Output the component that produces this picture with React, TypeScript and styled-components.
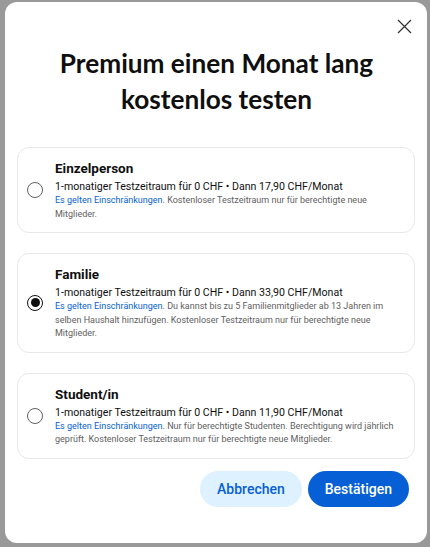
import styled, { createGlobalStyle } from "styled-components";

const GlobalStyle = createGlobalStyle`
    html, body {
        margin: 0;
        padding: 0;
        width: 430px;
        height: 547px;
        overflow: hidden;
        background: #999999;
    }
    * {
        box-sizing: border-box;
    }
`;

const Overlay = styled.div`
    width: 430px;
    height: 547px;
    padding: 2px 3px 4px 5px;
    background: #999999;
    font-family: Roboto, "Liberation Sans", Arial, sans-serif;
`;

const Dialog = styled.div`
    width: 422px;
    height: 541px;
    background: #ffffff;
    border-radius: 12px;
    padding: 12px 11px 0 12px;
    display: flex;
    flex-direction: column;
`;

const Header = styled.div`
    display: flex;
    justify-content: flex-end;
    height: 24px;
`;

const CloseButton = styled.button`
    width: 24px;
    height: 24px;
    padding: 0;
    border: none;
    background: none;
    display: flex;
    align-items: center;
    justify-content: center;
    cursor: pointer;
`;

const Title = styled.h1`
    margin: 7px 0 0;
    font-family: Lato, "Open Sans", sans-serif;
    font-weight: 700;
    font-size: 26.2px;
    line-height: 36px;
    color: #0f0f0f;
    text-align: center;
    padding: 0 24px;
`;

const PlanList = styled.div`
    margin-top: 30px;
    display: flex;
    flex-direction: column;
    gap: 20px;
    padding-right: 1px;
`;

const PlanCard = styled.label`
    display: flex;
    align-items: center;
    border: 1px solid #e8e8e8;
    border-radius: 12px;
    padding: 11px 14px 11px 9px;
    cursor: pointer;
`;

const Radio = styled.span<{ $checked?: boolean }>`
    flex: none;
    width: 16px;
    height: 16px;
    border-radius: 50%;
    border: 1.5px solid ${(p) => (p.$checked ? "#0f0f0f" : "#606060")};
    display: flex;
    align-items: center;
    justify-content: center;
    margin-right: 12px;

    &::after {
        content: "";
        width: 9px;
        height: 9px;
        border-radius: 50%;
        background: #0f0f0f;
        display: ${(p) => (p.$checked ? "block" : "none")};
    }
`;

const PlanText = styled.div`
    display: flex;
    flex-direction: column;
`;

const PlanName = styled.div`
    font-size: 13.5px;
    font-weight: 700;
    line-height: 18px;
    color: #0f0f0f;
`;

const PlanPrice = styled.div`
    margin-top: 2px;
    font-size: 10.6px;
    line-height: 15px;
    color: #0f0f0f;
`;

const PlanNote = styled.div`
    font-size: 9px;
    line-height: 13.5px;
    color: #606060;
`;

const Link = styled.span`
    color: #065fd4;
`;

const Actions = styled.div`
    margin-top: 12px;
    display: flex;
    justify-content: flex-end;
    gap: 6px;
    padding-right: 7px;
`;

const Button = styled.button<{ $primary?: boolean }>`
    height: 36px;
    padding: 0 17px;
    border: none;
    border-radius: 18px;
    font-family: Roboto, "Liberation Sans", sans-serif;
    font-size: 14px;
    font-weight: 500;
    background: ${(p) => (p.$primary ? "#065fd4" : "#def1ff")};
    color: ${(p) => (p.$primary ? "#ffffff" : "#065fd4")};
    cursor: pointer;
`;

const plans = [
    {
        name: "Einzelperson",
        price: "1-monatiger Testzeitraum für 0 CHF • Dann 17,90 CHF/Monat",
        note: "Kostenloser Testzeitraum nur für berechtigte neue Mitglieder.",
        checked: false,
    },
    {
        name: "Familie",
        price: "1-monatiger Testzeitraum für 0 CHF • Dann 33,90 CHF/Monat",
        note: "Du kannst bis zu 5 Familienmitglieder ab 13 Jahren im selben Haushalt hinzufügen. Kostenloser Testzeitraum nur für berechtigte neue Mitglieder.",
        checked: true,
    },
    {
        name: "Student/in",
        price: "1-monatiger Testzeitraum für 0 CHF • Dann 11,90 CHF/Monat",
        note: "Nur für berechtigte Studenten. Berechtigung wird jährlich geprüft. Kostenloser Testzeitraum nur für berechtigte neue Mitglieder.",
        checked: false,
    },
];

const App = () => {
    return (
        <>
            <GlobalStyle />
            <Overlay>
                <Dialog>
                    <Header>
                        <CloseButton aria-label="Schließen">
                            <svg width="15" height="15" viewBox="0 0 15 15">
                                <path d="M1 1 L14 14 M14 1 L1 14" stroke="#303030" strokeWidth="1.2" />
                            </svg>
                        </CloseButton>
                    </Header>

                    <Title>Premium einen Monat lang kostenlos testen</Title>

                    <PlanList>
                        {plans.map((plan) => (
                            <PlanCard key={plan.name}>
                                <Radio $checked={plan.checked} />
                                <PlanText>
                                    <PlanName>{plan.name}</PlanName>
                                    <PlanPrice>{plan.price}</PlanPrice>
                                    <PlanNote>
                                        <Link>Es gelten Einschränkungen.</Link> {plan.note}
                                    </PlanNote>
                                </PlanText>
                            </PlanCard>
                        ))}
                    </PlanList>

                    <Actions>
                        <Button>Abbrechen</Button>
                        <Button $primary>Bestätigen</Button>
                    </Actions>
                </Dialog>
            </Overlay>
        </>
    );
};

export default App;
